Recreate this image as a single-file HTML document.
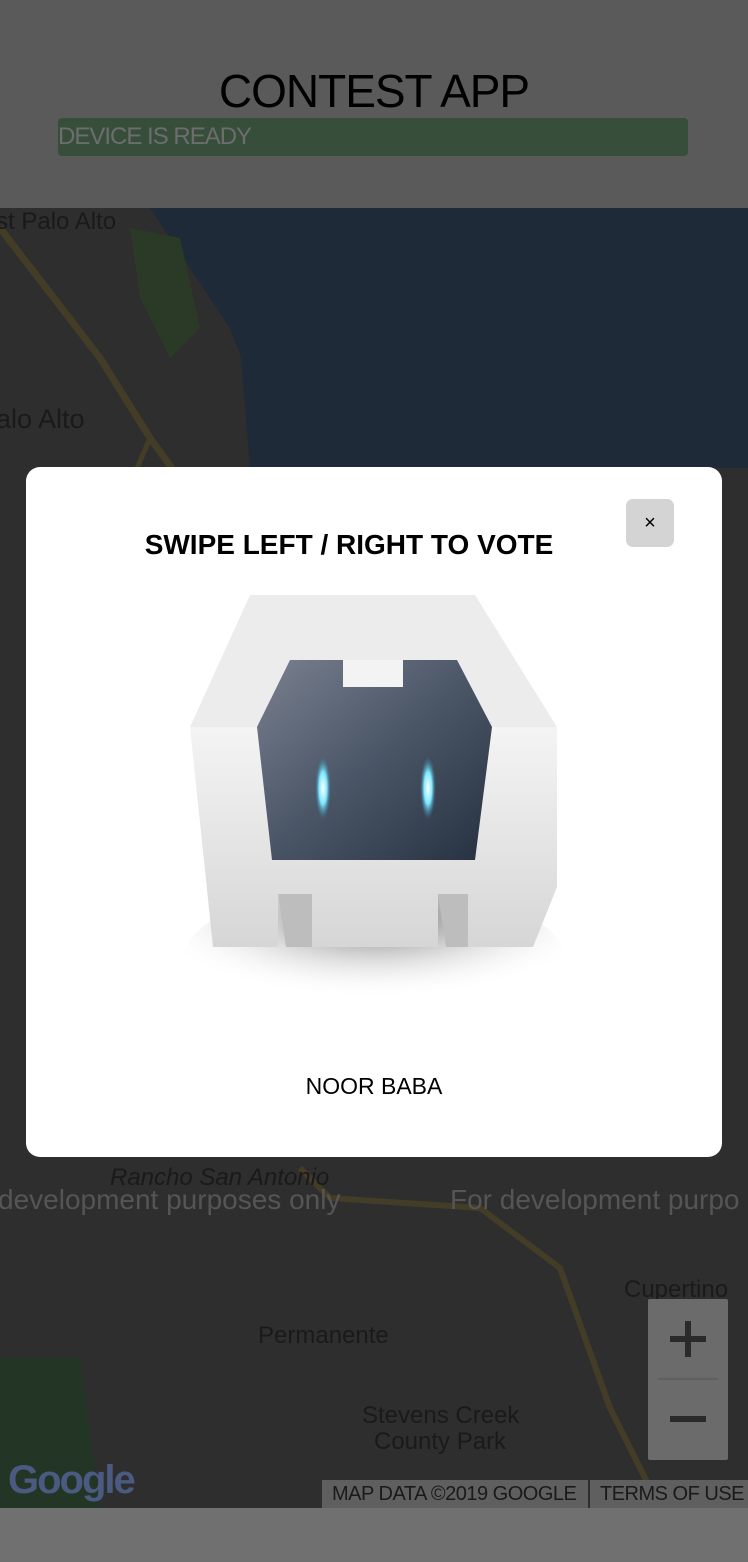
<!DOCTYPE html>
<html><head><meta charset="utf-8"><style>
*{margin:0;padding:0;box-sizing:border-box}
body{width:748px;height:1562px;position:relative;overflow:hidden;background:#707070;font-family:"Liberation Sans",sans-serif}
#hdr{position:absolute;left:0;top:0;width:748px;height:208px;background:#5a5a5a}
h1{position:absolute;top:64px;left:0;width:748px;text-align:center;font-weight:normal;font-size:46px;color:#000;letter-spacing:-1px}
#ready{position:absolute;left:58px;top:118px;width:630px;height:38px;background:#374e3b;border-radius:4px;color:#6d6d6d;font-size:24px;line-height:38px;letter-spacing:-1px}
#map{position:absolute;left:0;top:208px;width:748px;height:1300px;background:#2e2e2e;overflow:hidden}
.lbl{position:absolute;color:#1a1a1a;font-size:24px;white-space:nowrap}
.dev{position:absolute;color:#555;font-size:28px;white-space:nowrap}
#modal{position:absolute;left:26px;top:467px;width:696px;height:690px;background:#fff;border-radius:14px}
#close{position:absolute;left:600px;top:32px;width:48px;height:48px;background:#d4d4d4;border-radius:7px;text-align:center;line-height:48px;font-size:20px;color:#000}
#title{position:absolute;top:62px;left:0;width:646px;text-align:center;font-weight:bold;font-size:28px;color:#000}
#name{position:absolute;top:606px;left:0;width:696px;text-align:center;font-size:23px;color:#000}
#zoom{position:absolute;left:648px;top:1299px;width:80px;height:161px;background:#6b6b6b;border-radius:2px}
#attr{position:absolute;left:322px;top:1480px;width:426px;height:28px;background:#5f5f5f;color:#1a1a1a;font-size:20px;line-height:28px;white-space:nowrap;letter-spacing:-0.5px}
</style></head><body>
<div id="hdr"><h1>CONTEST APP</h1><div id="ready">DEVICE IS READY</div></div>
<div id="map">
<svg width="748" height="1300" style="position:absolute;left:0;top:0">
<path d="M150 0 L748 0 L748 260 L300 260 L260 200 L230 120 L190 60 Z" fill="#1e2a38"/>
<path d="M240 140 L420 150 L748 130 L748 260 L250 260 Z" fill="#1e2a38"/>
<path d="M0 20 L100 150 L150 230 L230 340" stroke="#433d27" stroke-width="7" fill="none"/>
<path d="M150 230 L120 300" stroke="#433d27" stroke-width="5" fill="none"/>
<path d="M300 960 L330 990 L480 1000 L560 1060 L610 1200 L660 1300" stroke="#433d27" stroke-width="6" fill="none"/>
<path d="M0 1150 L80 1150 L100 1300 L0 1300 Z" fill="#233524"/>
<path d="M130 20 L180 30 L200 120 L170 150 L140 90 Z" fill="#2a3a26"/>
</svg>
<div class="lbl" style="left:-4px;top:0">st Palo Alto</div>
<div class="lbl" style="left:-4px;top:196px;font-size:27px">alo Alto</div>
<div class="dev" style="left:-2px;top:976px">development purposes only</div>
<div class="dev" style="left:450px;top:976px">For development purpo</div>
<div class="lbl" style="left:110px;top:956px;font-style:italic">Rancho San Antonio</div>
<div class="lbl" style="left:258px;top:1114px">Permanente</div>
<div class="lbl" style="left:362px;top:1194px">Stevens Creek</div>
<div class="lbl" style="left:374px;top:1220px">County Park</div>
<div class="lbl" style="left:624px;top:1068px">Cupertino</div>
<div style="position:absolute;left:8px;top:1250px;font-size:40px;font-weight:bold;color:#4a5a80;letter-spacing:-2px">Google</div>
</div>
<div id="zoom"><div style="position:absolute;left:10px;top:79px;width:60px;height:2px;background:#5f5f5f"></div>
<div style="position:absolute;left:22px;top:37px;width:36px;height:6px;background:#2a2a2a"></div>
<div style="position:absolute;left:37px;top:22px;width:6px;height:36px;background:#2a2a2a"></div>
<div style="position:absolute;left:22px;top:117px;width:36px;height:6px;background:#2a2a2a"></div></div>
<div id="attr"><span style="position:absolute;left:10px">MAP DATA ©2019 GOOGLE</span><span style="position:absolute;left:266px;top:0;width:2px;height:28px;background:#2e2e2e"></span><span style="position:absolute;left:278px">TERMS OF USE</span></div>
<div id="modal">
<div id="close">×</div>
<div id="title">SWIPE LEFT / RIGHT TO VOTE</div>
<svg width="696" height="690" style="position:absolute;left:0;top:0">
<defs>
<linearGradient id="bd" x1="0" y1="0" x2="0" y2="1"><stop offset="0" stop-color="#f4f4f4"/><stop offset="1" stop-color="#d6d6d6"/></linearGradient>
<linearGradient id="sc" x1="0" y1="0" x2="1" y2="1"><stop offset="0" stop-color="#7a8190"/><stop offset=".5" stop-color="#4a5566"/><stop offset="1" stop-color="#263140"/></linearGradient>
<radialGradient id="sh" cx=".5" cy=".2" r=".6"><stop offset="0" stop-color="#333" stop-opacity=".8"/><stop offset="1" stop-color="#fff" stop-opacity="0"/></radialGradient>
<radialGradient id="ey"><stop offset="0" stop-color="#fff"/><stop offset=".5" stop-color="#7ee8ff"/><stop offset="1" stop-color="#2a7090" stop-opacity="0"/></radialGradient>
</defs>
<ellipse cx="348" cy="490" rx="190" ry="70" fill="url(#sh)"/>
<polygon points="224,128 449,128 531,260 164,260" fill="#ececec"/>
<polygon points="164,260 531,260 531,420 507,480 442,480 442,427 412,427 412,480 286,480 286,427 252,427 252,480 187,480" fill="url(#bd)"/>
<polygon points="252,427 286,427 286,480 260,480" fill="#bdbdbd"/>
<polygon points="412,427 442,427 442,480 420,480" fill="#bdbdbd"/>
<polygon points="264,193 317,193 317,220 377,220 377,193 431,193 466,260 449,393 246,393 231,260" fill="url(#sc)"/>
<polygon points="317,193 377,193 377,220 317,220" fill="#f3f3f3"/>
<ellipse cx="297" cy="321" rx="8" ry="32" fill="url(#ey)"/>
<ellipse cx="402" cy="321" rx="8" ry="32" fill="url(#ey)"/>
</svg>
<div id="name">NOOR BABA</div>
</div>
</body></html>
